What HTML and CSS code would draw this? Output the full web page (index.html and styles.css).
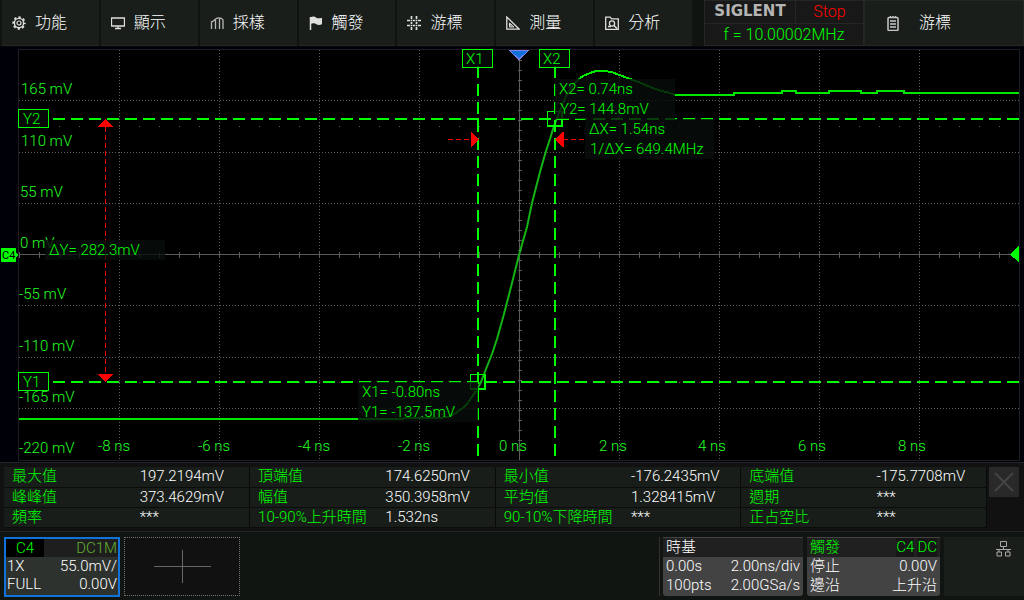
FILE: index.html
```
<!DOCTYPE html>
<html lang="zh-Hant">
<head>
<meta charset="utf-8">
<meta name="viewport" content="width=device-width, initial-scale=1">
<title>SIGLENT</title>
<link rel="stylesheet" href="styles.css">
</head>
<body>
<header class="topbar">
  <nav class="menu">
    <button class="menu-item" type="button">
      <svg class="icon" viewBox="0 0 14 14"><circle cx="7" cy="7" r="4.6" fill="none" stroke="currentColor" stroke-width="1.4"/><circle cx="7" cy="7" r="5.8" fill="none" stroke="currentColor" stroke-width="1.8" stroke-dasharray="2.4 2.15" stroke-dashoffset="1.2"/><circle cx="7" cy="7" r="2" fill="none" stroke="currentColor" stroke-width="1.2"/></svg>功能</button>
    <button class="menu-item" type="button">
      <svg class="icon" viewBox="0 0 14 14"><path d="M.5 2h13v8H.5zM7 10v2M4 12.500h6" fill="none" stroke="currentColor" stroke-width="1.3"/></svg>顯示</button>
    <button class="menu-item" type="button">
      <svg class="icon" viewBox="0 0 14 14"><path d="M.8 6C4 6 5 1.800 8.500 1.800S12.500 3 13.200 4M1.500 6v7M5.500 4v9M9.500 2.500V13M13 4v9" fill="none" stroke="currentColor" stroke-width="1.3" opacity=".8"/></svg>採樣</button>
    <button class="menu-item" type="button">
      <svg class="icon" viewBox="0 0 14 14"><path d="M1.500 1v13" stroke="currentColor" stroke-width="1.500"/><path d="M1 1.500C4 0 5.500.3 7 1.500s3.500 1 6 .3v6.500c-2.500 1-4.500.8-6-.3s-3-.8-6 .3z" fill="currentColor"/></svg>觸發</button>
    <button class="menu-item" type="button">
      <svg class="icon" viewBox="0 0 14 14"><path d="M4.500 0v14M9.500 0v14M0 4.500h14M0 9.500h14" fill="none" stroke="currentColor" stroke-width="1.700" stroke-dasharray="3 .7 1.600 .7 2 .7 1.600 .7 3"/></svg>游標</button>
    <button class="menu-item" type="button">
      <svg class="icon" viewBox="0 0 14 14"><path d="M.8 1v12.200h12.400z" fill="none" stroke="currentColor" stroke-width="1.300"/><path d="M3.500 7v4H8zM3.500 8.500h1.500v2.500" fill="none" stroke="currentColor"/></svg>測量</button>
    <button class="menu-item" type="button">
      <svg class="icon" viewBox="0 0 14 14"><path d="M.7 13.300V1.200h4.500l1.300 1.600h6.800v10.500z" fill="none" stroke="currentColor" stroke-width="1.300"/><circle cx="7" cy="7.500" r="2.600" fill="none" stroke="currentColor" stroke-width="1.300"/><path d="M9 9.500l3 3M3 10.500h3" stroke="currentColor" stroke-width="1.500"/></svg>分析</button>
  </nav>
  <section class="status">
    <div class="brand">SIGLENT</div>
    <div class="run-state">Stop</div>
    <div class="frequency">f = 10.00002MHz</div>
  </section>
  <button class="side-title" type="button">
    <svg class="icon-list" viewBox="0 0 12 15"><rect x="1" y="1.500" width="10" height="13" rx="1" fill="none" stroke="currentColor" stroke-width="1.500"/><path d="M3.500 0v2M6 0v2M8.500 0v2M3 5h6M3 8h6M3 11h6" stroke="currentColor" stroke-width="1.300"/></svg>游標</button>
</header>

<main class="scope">
  <svg class="plot" viewBox="0 47 1024 415" role="img" aria-label="C4">
    <rect class="screen" x="18.500" y="49.500" width="1001" height="411"/>
    <g class="grid">
      <path d="M119.500 50v410M219.500 50v410M319.500 50v410M419.500 50v410M619.500 50v410M719.500 50v410M819.500 50v410M919.500 50v410"/>
      <path d="M19 100.500h1000M19 152.500h1000M19 203.500h1000M19 305.500h1000M19 357.500h1000M19 408.500h1000"/>
      <path class="minor" d="M19 126.500h1000M19 382.500h1000"/>
    </g>
    <g class="axis">
      <path d="M19 254.500h1000M519.500 50v410"/>
      <path class="ticks-x" d="M19 254.500h1000"/>
      <path class="ticks-y" d="M519.500 60v400"/>
    </g>
    <g class="trace">
      <path d="M19 419H404M404 418H438L448 417L455 413.500L462 408.500L467 404L472 397L476 391"/>
      <path class="edge" d="M476 391L481 382L486 369L492 354L497 339L504 314L512 283L519 255L527 227L532 203L540 172L546 151L550 139L554 126L559 113L566 96L573 85L580 78"/>
      <path d="M580 78L584 75.500L590 73L596 71H605L613 72.500L622 76L630 79L640 82.500L650 87L660 90.500L668 92.500L675 95H734V93H782V91H796V93H829V91H861V93H877V91H904V93H1019"/>
    </g>
    <g class="cursor">
      <path d="M53 119H1019M53 382H1019"/>
      <path d="M478 66V457M555 66V457"/>
    </g>
    <g class="cross">
      <path d="M547.500 126V111.500H562M470.500 389V374.500H485"/>
      <path class="cross-bold" d="M547 126H562V111M470 389H485V374"/>
    </g>
    <g class="span">
      <path d="M105.500 127V374"/>
      <path d="M448 139.500h22M563 139.500h22"/>
    </g>
    <path class="arrow" d="M105.500 119l8 8h-16zM105.500 382l8-8h-16zM478.500 139.500l-8-8v16zM554.500 139.500l9-8v16z"/>
    <g class="label">
      <text x="21" y="94">165 mV</text><text x="21" y="146">110 mV</text><text x="20" y="197">55 mV</text><text x="20" y="248">0 mV</text>
      <text x="19" y="299">-55 mV</text><text x="19" y="351">-110 mV</text><text x="19" y="402">-165 mV</text><text x="19" y="453">-220 mV</text>
      <text x="98" y="451">-8 ns</text><text x="198" y="451">-6 ns</text><text x="298" y="451">-4 ns</text><text x="398" y="451">-2 ns</text><text x="499" y="451">0 ns</text><text x="599" y="451">2 ns</text><text x="698" y="451">4 ns</text><text x="798" y="451">6 ns</text><text x="898" y="451">8 ns</text>
    </g>
    <g class="veil">
      <rect x="555" y="79" width="120" height="40"/><rect x="585" y="119" width="129" height="40"/>
      <rect x="358" y="382" width="120" height="40"/><rect x="45" y="240" width="120" height="20"/>
    </g>
    <g class="tag">
      <rect x="18.500" y="109.500" width="30" height="18"/><rect x="18.500" y="372.500" width="30" height="18"/>
      <rect x="462.500" y="49.500" width="30" height="18"/><rect x="539.500" y="49.500" width="30" height="18"/>
    </g>
    <g class="readout">
      <text x="23" y="124">Y2</text><text x="23" y="387">Y1</text><text x="466" y="64">X1</text><text x="543" y="64">X2</text>
      <text x="559" y="94">X2= 0.74ns</text><text x="560" y="114">Y2= 144.8mV</text>
      <text x="589" y="134">ΔX= 1.54ns</text><text x="590" y="154">1/ΔX= 649.4MHz</text>
      <text x="362" y="397">X1= -0.80ns</text><text x="362" y="417">Y1= -137.5mV</text>
      <text x="49" y="255">ΔY= 282.3mV</text>
    </g>
    <path class="trigger-time" d="M509.500 50.500h19l-9.500 9z"/>
    <path class="solid" d="M1010 254.500l9-9v17z"/>
    <path class="solid" d="M2 248h13q1 0 1 1v3l2 3-2 3v3q0 1-1 1H2q-1 0-1-1v-12q0-1 1-1z"/>
    <text class="channel-mark" x="2" y="259">C4</text>
  </svg>
</main>

<section class="measure">
  <table class="measure-table">
    <tbody>
      <tr><th scope="row">最大值</th><td>197.2194mV</td><th scope="row">頂端值</th><td>174.6250mV</td><th scope="row">最小值</th><td>-176.2435mV</td><th scope="row">底端值</th><td>-175.7708mV</td></tr>
      <tr><th scope="row">峰峰值</th><td>373.4629mV</td><th scope="row">幅值</th><td>350.3958mV</td><th scope="row">平均值</th><td>1.328415mV</td><th scope="row">週期</th><td>***</td></tr>
      <tr><th scope="row">頻率</th><td>***</td><th scope="row">10-90%上升時間</th><td>1.532ns</td><th scope="row">90-10%下降時間</th><td>***</td><th scope="row">正占空比</th><td>***</td></tr>
    </tbody>
  </table>
  <button class="close" type="button" aria-label="關閉"><svg class="close-icon" viewBox="0 0 20 20"><path d="M1 1l18 18M19 1L1 19" stroke="currentColor" stroke-width="2"/></svg></button>
</section>

<footer class="bottom">
  <button class="channel" type="button">
    <span class="row channel-head"><span class="channel-name">C4</span><span class="coupling">DC1M</span></span>
    <span class="row"><span>1X</span><span>55.0mV/</span></span>
    <span class="row"><span>FULL</span><span>0.00V</span></span>
  </button>
  <button class="add" type="button" aria-label="+"><svg class="add-icon" viewBox="0 0 57 33"><path d="M0 16.500h57M28.500 0v33" stroke="currentColor"/></svg></button>
  <div class="settings">
    <button class="card timebase" type="button">
      <span class="row card-head"><span>時基</span></span>
      <span class="row"><span>0.00s</span><span>2.00ns/div</span></span>
      <span class="row"><span>100pts</span><span>2.00GSa/s</span></span>
    </button>
    <button class="card trigger" type="button">
      <span class="row card-head green"><span>觸發</span><span class="badges"><span class="badge">C4</span><span class="badge">DC</span></span></span>
      <span class="row"><span>停止</span><span>0.00V</span></span>
      <span class="row"><span>邊沿</span><span>上升沿</span></span>
    </button>
    <div class="network"><svg class="network-icon" viewBox="0 0 15 16"><path d="M4.500.5h6v5h-6zM1 11h4.500v4H1zM9.500 11H14v4H9.500zM7.500 5.500v3M3 11V8.500h9V11M0 8.500h15" fill="none" stroke="currentColor"/></svg></div>
  </div>
</footer>
</body>
</html>
```
FILE: styles.css
```
* { box-sizing: border-box; }
body {
  margin: 0;
  min-height: 100vh;
  display: flex;
  flex-direction: column;
  background: #000008;
  color: #fff;
  font: 300 15px/20px Roboto, "Liberation Sans", "Noto Sans CJK TC", sans-serif;
}
button {
  margin: 0;
  padding: 0;
  border: 0;
  background: none;
  color: inherit;
  font: inherit;
  text-align: left;
}
svg { display: block; }

.topbar {
  display: flex;
  height: 47px;
  padding-left: 2px;
  background: #101410;
  border-bottom: 1px solid #060808;
}
.menu { display: flex; flex: 1; gap: 2px; }
.menu-item {
  flex: 1;
  display: flex;
  align-items: center;
  gap: 9px;
  height: 46px;
  padding-left: 10px;
  background: #191e1a;
  border-bottom: 1px solid #222722;
  font-size: 16px;
}
.icon { width: 14px; height: 14px; color: #dde0dd; }
.status {
  width: 160px;
  margin-left: 12px;
  display: grid;
  grid-template-columns: 90px 1fr;
  grid-template-rows: 22px 21px;
  gap: 1px;
  height: 46px;
  padding: 1px;
  background: #242725;
  text-align: center;
}
.brand, .run-state, .frequency { background: #171817; font-size: 16px; line-height: 21px; }
.brand { color: #b4b4b4; font-family: "DejaVu Sans", sans-serif; font-weight: 700; font-size: 15px; line-height: 20px; }
.run-state { color: #f00; }
.frequency { grid-column: 1 / -1; color: #0f0; }
.side-title {
  width: 160px;
  display: flex;
  align-items: center;
  gap: 20px;
  height: 46px;
  padding-left: 22px;
  background: #191e1a;
  border: 1px solid #222722;
  font-size: 16px;
}
.icon-list { width: 12px; height: 15px; color: #c8c8c8; }

.scope { flex: none; }
.plot { width: 100%; height: auto; font-size: 15px; shape-rendering: crispEdges; }
.screen { fill: #000; stroke: #1d1d24; }
.grid { stroke: #5c5c5c; stroke-dasharray: 1 2; }
.grid .minor { stroke-dasharray: 1 19; }
.axis { stroke: #5c5c5c; }
.axis .ticks-x { stroke-width: 6; stroke-dasharray: 1 19; }
.axis .ticks-y { stroke-width: 4; stroke-dasharray: 1 9; }
.trace { fill: none; stroke: #00e800; stroke-width: 2; }
.trace .edge { stroke: #14b414; shape-rendering: auto; }
.cursor { stroke: #0f0; stroke-width: 2; stroke-dasharray: 12 6; }
.cross { fill: none; stroke: #0f0; }
.cross-bold { stroke-width: 2; }
.span { stroke: #f00; stroke-dasharray: 5 3; }
.arrow { fill: #f00; }
.label { fill: #2f2; }
.veil { fill: #080d0a; fill-opacity: .8; }
.tag { fill: #080d0a; fill-opacity: .7; stroke: #0f0; }
.readout { fill: #0f0; }
.trigger-time { fill: #1272dc; stroke: #8080e8; }
.solid { fill: #0f0; }
.channel-mark { fill: #000; font-size: 11px; font-weight: 400; }

.measure {
  display: flex;
  align-items: flex-start;
  gap: 2px;
  height: 70px;
  padding: 4px 5px 4px 4px;
  background: #111;
  border: solid #20242a;
  border-width: 1px 0;
}
.measure-table { flex: 1; border-collapse: collapse; table-layout: fixed; background: #181d19; }
.measure-table th, .measure-table td {
  height: 20px;
  padding: 0;
  border-bottom: 1px solid #0b0d0b;
  line-height: 19px;
  text-align: left;
  font-weight: 300;
  white-space: nowrap;
}
.measure-table th { width: 13%; padding-left: 8px; color: #0f0; }
.measure-table td { width: 12%; padding-left: 8px; border-right: 1px solid #080a08; }
.close { display: grid; place-items: center; width: 30px; height: 30px; background: #292929; color: #454545; }
.close-icon { width: 20px; height: 20px; }

.bottom {
  flex: 1;
  display: flex;
  align-items: flex-start;
  gap: 4px;
  padding: 5px 0 4px 4px;
  background: #111512;
}
.row { display: flex; justify-content: space-between; padding: 0 3px; line-height: 19px; white-space: nowrap; }
.channel { width: 116px; padding-bottom: 2px; border: 2px solid #1272dc; background: #2e322f; }
.channel .row { padding: 0 1px; line-height: 18px; }
.channel .channel-head { background: #1e1e1e; padding-left: 0; }
.channel-name { width: 38px; background: #000; color: #0f0; text-align: center; }
.coupling { color: #64b232; }
.add { display: grid; place-items: center; width: 116px; height: 59px; border: 1px dotted #747474; background: #101110; color: #666; }
.add-icon { width: 57px; height: 33px; }
.settings { display: flex; gap: 4px; margin-left: auto; padding-left: 3px; border-left: 1px solid #303330; }
.card { height: 59px; border-radius: 0 0 3px 3px; background: #434343; }
.timebase { width: 140px; }
.trigger { width: 133px; }
.card-head { background: #202020; }
.green { color: #0f0; }
.badges { display: flex; gap: 3px; }
.badge { background: #161616; }
.network { width: 80px; height: 59px; padding: 4px 0 0 52px; background: #191e1a; color: #a8a8a8; }
.network-icon { width: 15px; height: 16px; }
```
